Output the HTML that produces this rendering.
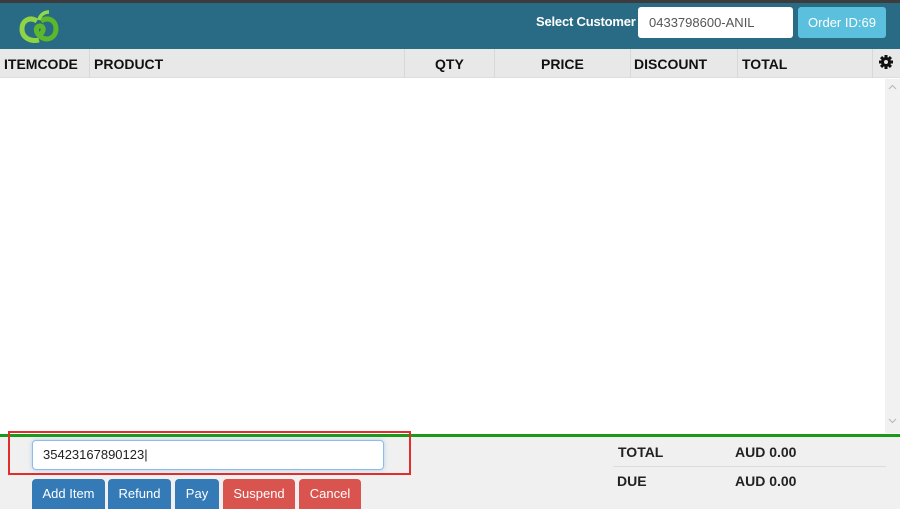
<!DOCTYPE html>
<html><head><style>
*{box-sizing:border-box;margin:0;padding:0}
body{width:900px;height:509px;overflow:hidden;font-family:"Liberation Sans",Arial,sans-serif;background:#fff;position:relative}
.abs{position:absolute}
.topbar{left:0;top:0;width:900px;height:3px;background:#3c3c3c}
.hdr{left:0;top:3px;width:900px;height:46px;background:#296a84}
.th{left:0;top:49px;width:900px;height:29px;background:#e8e8e8;border-bottom:1px solid #ddd}
.th span{position:absolute;top:7px;font-weight:bold;font-size:14px;color:#111}
.sep{position:absolute;top:0;width:1px;height:29px;background:#d8d8d8}
.btn{position:absolute;top:479px;height:30px;border-radius:4px 4px 0 0;color:#fff;font-size:13px;text-align:center;line-height:29px}
.b{background:#337ab7}.r{background:#d9534f}
.tot{position:absolute;font-weight:bold;font-size:14px;color:#222}
</style></head><body>
<div class="abs topbar"></div>
<div class="abs hdr">
<svg class="abs" style="left:19px;top:6px" width="40" height="36" viewBox="0 0 40 36">
<path d="M18 12 C10 7 3 12 3 20 C3 29 12 33 20 31" fill="none" stroke="#8fd444" stroke-width="5"/>
<path d="M22 12 C30 7 37 12 37 20 C37 28 29 33 22 28 C16 24 16 17 21 17 C26 17 25 25 19 26" fill="none" stroke="#5cb82a" stroke-width="5"/>
<path d="M20 11 C21 6 25 3 30 3" fill="none" stroke="#8fd94a" stroke-width="3.5"/>
</svg>
<div class="abs" style="left:536px;top:11px;color:#fff;font-weight:bold;font-size:13px;letter-spacing:-0.2px">Select Customer</div>
<div class="abs" style="left:638px;top:4px;width:155px;height:31px;background:#fff;border-radius:3px;padding:8px 11px;font-size:13px;color:#555">0433798600-ANIL</div>
<div class="abs" style="left:798px;top:4px;width:88px;height:31px;background:#5bc0de;border-radius:3px;color:#fff;font-size:13px;text-align:center;line-height:31px">Order ID:69</div>
</div>
<div class="abs th">
<span style="left:4px">ITEMCODE</span><div class="sep" style="left:89px"></div>
<span style="left:94px">PRODUCT</span><div class="sep" style="left:404px"></div>
<span style="left:435px">QTY</span><div class="sep" style="left:494px"></div>
<span style="left:541px">PRICE</span><div class="sep" style="left:630px"></div>
<span style="left:634px">DISCOUNT</span><div class="sep" style="left:737px"></div>
<span style="left:742px">TOTAL</span><div class="sep" style="left:872px"></div>
<svg style="position:absolute;left:879px;top:6px" width="14" height="14" viewBox="0 0 14 14"><g fill="#111"><circle cx="7" cy="7" r="5"/><rect x="5.5" y="0" width="3" height="14"/><rect x="0" y="5.5" width="14" height="3"/><rect x="5.5" y="0" width="3" height="14" transform="rotate(45 7 7)"/><rect x="5.5" y="0" width="3" height="14" transform="rotate(-45 7 7)"/></g><circle cx="7" cy="7" r="2" fill="#e8e8e8"/></svg>
</div>
<div class="abs" style="left:885px;top:79px;width:15px;height:354px;background:#f1f1f1"></div>
<svg class="abs" style="left:888px;top:84px" width="9" height="6" viewBox="0 0 9 6"><path d="M1 5 L4.5 1.5 L8 5" fill="none" stroke="#bbb" stroke-width="1.2"/></svg>
<svg class="abs" style="left:888px;top:418px" width="9" height="6" viewBox="0 0 9 6"><path d="M1 1 L4.5 4.5 L8 1" fill="none" stroke="#bbb" stroke-width="1.2"/></svg>
<div class="abs" style="left:0;top:436px;width:900px;height:73px;background:#f0f0f0"></div>
<div class="abs" style="left:0;top:434px;width:900px;height:3px;background:#1a9a1a"></div>
<div class="abs" style="left:8px;top:431px;width:403px;height:44px;border:2px solid #e32c2c"></div>
<div class="abs" style="left:32px;top:440px;width:352px;height:30px;background:#fff;border:1px solid #8ebce6;border-radius:4px;box-shadow:0 0 4px rgba(102,175,233,.5);padding:6px 10px;font-size:13px;color:#222">35423167890123|</div>
<div class="btn b" style="left:32px;width:73px">Add Item</div>
<div class="btn b" style="left:108px;width:63px">Refund</div>
<div class="btn b" style="left:175px;width:44px">Pay</div>
<div class="btn r" style="left:223px;width:72px">Suspend</div>
<div class="btn r" style="left:299px;width:62px">Cancel</div>
<div class="tot" style="left:618px;top:444px">TOTAL</div>
<div class="tot" style="left:735px;top:444px">AUD 0.00</div>
<div class="abs" style="left:613px;top:466px;width:273px;height:1px;background:#ddd"></div>
<div class="tot" style="left:617px;top:473px">DUE</div>
<div class="tot" style="left:735px;top:473px">AUD 0.00</div>
</body></html>
